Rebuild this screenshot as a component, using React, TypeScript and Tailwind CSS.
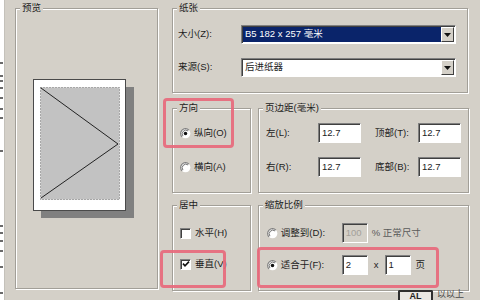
import React from 'react';

const stripMarks = [62, 75, 80, 87, 97, 108, 117, 150, 225, 232, 240, 250, 266, 292];

const Group = ({ label, className, children }: { label: string; className?: string; children?: React.ReactNode }) => (
  <div className={`relative border border-[#a29f98] shadow-[1px_1px_0_#ffffff,inset_1px_1px_0_#ffffff] ${className ?? ''}`}>
    <span className="absolute -top-[7px] left-[4px] bg-[#d4d0c8] px-[2px] leading-[12px]">{label}</span>
    {children}
  </div>
);

const Radio = ({ checked }: { checked?: boolean }) => (
  <svg width="11" height="11" viewBox="0 0 12 12" className="shrink-0">
    <circle cx="6" cy="6" r="5.3" fill="#ffffff" />
    <path d="M2.25 9.75 A5.3 5.3 0 0 1 9.75 2.25" fill="none" stroke="#7d7d7d" strokeWidth="1.2" />
    <path d="M3.2 8.8 A4 4 0 0 1 8.8 3.2" fill="none" stroke="#404040" strokeWidth="0.8" />
    {checked && <circle cx="6" cy="6" r="1.9" fill="#111111" />}
  </svg>
);

const Check = ({ checked }: { checked?: boolean }) => (
  <div className="flex h-[11px] w-[11px] shrink-0 items-center justify-center border border-t-[#808080] border-l-[#808080] border-b-white border-r-white bg-white shadow-[inset_1px_1px_0_#404040]">
    {checked && (
      <svg width="8" height="8" viewBox="0 0 8 8">
        <path d="M1 3.6 L3 5.8 L7 1.6" fill="none" stroke="#111111" strokeWidth="1.6" />
      </svg>
    )}
  </div>
);

const Field = ({ value, className, disabled }: { value: string; className?: string; disabled?: boolean }) => (
  <div
    className={`flex h-[20px] items-center border border-t-[#808080] border-l-[#808080] border-b-white border-r-white pl-[3px] shadow-[inset_1px_1px_0_#404040] ${
      disabled ? 'bg-[#d4d0c8] text-[#a3a09a]' : 'bg-white'
    } ${className ?? ''}`}
  >
    {value}
  </div>
);

const DropButton = () => (
  <div className="flex h-[15px] w-[13px] items-center justify-center border border-t-white border-l-white border-b-[#404040] border-r-[#404040] bg-[#d4d0c8]">
    <svg width="7" height="4" viewBox="0 0 7 4">
      <path d="M0 0 H7 L3.5 4 Z" fill="#111111" />
    </svg>
  </div>
);

const Select = ({ value, selected }: { value: string; selected?: boolean }) => (
  <div className="flex h-[19px] w-[215px] items-center border border-t-[#808080] border-l-[#808080] border-b-white border-r-white bg-white p-[1px] shadow-[inset_1px_1px_0_#404040]">
    <div className={`flex h-full flex-1 items-center pl-[2px] ${selected ? 'bg-[#0a246a] text-white' : ''}`}>{value}</div>
    <DropButton />
  </div>
);

const PagePreview = () => (
  <svg width="101" height="139" viewBox="0 0 101 139">
    <rect x="8" y="8" width="93" height="131" fill="#808080" />
    <rect x="0.5" y="0.5" width="92" height="131" fill="#ffffff" stroke="#4a4a4a" strokeWidth="1" />
    <rect x="7.5" y="8.5" width="79" height="112" fill="#c2c2c2" stroke="#6e6e6e" strokeWidth="1" strokeDasharray="1 2" />
    <polyline points="8,9 85,65 8,119" fill="none" stroke="#222222" strokeWidth="1" />
  </svg>
);

const Highlight = ({ className }: { className: string }) => (
  <div className={`pointer-events-none absolute rounded-[4px] border-[3px] border-[#e8677a]/90 ${className}`} />
);

export default function App() {
  return (
    <div className="relative flex h-[300px] w-[480px] overflow-hidden bg-[#d4d0c8] font-['Liberation_Sans','Noto_Sans_CJK_SC',sans-serif] text-[9.5px] text-[#1c1c1c]">
      <svg width="5" height="300" className="shrink-0">
        <rect width="4" height="300" fill="#ffffff" />
        <rect x="4" width="1" height="300" fill="#c4c1ba" />
        {stripMarks.map((y) => (
          <rect key={y} x="0" y={y} width="3" height="2" fill="#6a6a6a" />
        ))}
      </svg>

      <div className="flex gap-[14px] pl-[10px] pt-[8px]">
        <Group label="预览" className="flex h-[281px] w-[143px] items-center justify-center pr-[6px]">
          <PagePreview />
        </Group>

        <div className="flex w-[297px] flex-col">
          <Group label="纸张" className="flex h-[85px] w-[296px] flex-col gap-[14px] pl-[5px] pt-[16px]">
            <div className="flex items-center">
              <span className="w-[63px]">大小(Z):</span>
              <Select value="B5 182 x 257 毫米" selected />
            </div>
            <div className="flex items-center">
              <span className="w-[63px]">来源(S):</span>
              <Select value="后进纸器" />
            </div>
          </Group>

          <div className="mt-[15px] flex h-[85px] gap-[7px]">
            <Group label="方向" className="flex w-[79px] flex-col gap-[20px] pl-[7px] pt-[17px]">
              <div className="flex h-[14px] items-center gap-[3px]">
                <Radio checked />
                <span>纵向(O)</span>
              </div>
              <div className="flex h-[14px] items-center gap-[3px]">
                <Radio />
                <span>横向(A)</span>
              </div>
            </Group>

            <Group label="页边距(毫米)" className="flex w-[211px] flex-col gap-[14px] pl-[7px] pt-[14px]">
              <div className="flex items-center">
                <span className="w-[52px]">左(L):</span>
                <Field value="12.7" className="w-[43px]" />
                <span className="ml-[14px] w-[43px]">顶部(T):</span>
                <Field value="12.7" className="w-[43px]" />
              </div>
              <div className="flex items-center">
                <span className="w-[52px]">右(R):</span>
                <Field value="12.7" className="w-[43px]" />
                <span className="ml-[14px] w-[43px]">底部(B):</span>
                <Field value="12.7" className="w-[43px]" />
              </div>
            </Group>
          </div>

          <div className="mt-[12px] flex h-[86px] gap-[7px]">
            <Group label="居中" className="flex w-[79px] flex-col gap-[17px] pl-[7px] pt-[20px]">
              <div className="flex h-[14px] items-center gap-[4px]">
                <Check />
                <span>水平(H)</span>
              </div>
              <div className="flex h-[14px] items-center gap-[4px]">
                <Check checked />
                <span>垂直(V)</span>
              </div>
            </Group>

            <Group label="缩放比例" className="flex w-[212px] flex-col gap-[12px] pl-[8px] pt-[17px]">
              <div className="flex h-[20px] items-center">
                <div className="flex w-[75px] items-center gap-[3px]">
                  <Radio />
                  <span>调整到(D):</span>
                </div>
                <Field value="100" disabled className="w-[26px]" />
                <span className="ml-[4px] text-[#5a5a5a]">% 正常尺寸</span>
              </div>
              <div className="flex h-[20px] items-center">
                <div className="flex w-[75px] items-center gap-[3px]">
                  <Radio checked />
                  <span>适合于(F):</span>
                </div>
                <Field value="2" className="w-[26px]" />
                <span className="mx-[6px]">x</span>
                <Field value="1" className="w-[26px]" />
                <span className="ml-[5px]">页</span>
              </div>
            </Group>
          </div>
        </div>
      </div>

      <Highlight className="left-[163px] top-[98px] h-[50px] w-[71px]" />
      <Highlight className="left-[160px] top-[250px] h-[38px] w-[66px]" />
      <Highlight className="left-[257px] top-[247px] h-[41px] w-[182px]" />

      <div className="absolute left-[398px] top-[290px] flex h-[12px] w-[35px] items-start justify-center rounded-t-[2px] border-2 border-b-0 border-[#2e2e2e] bg-[#e9e7e3] text-[9px] font-bold leading-[9px] text-[#222222]">
        AL
      </div>
      <span className="absolute left-[437px] top-[290px] text-[9px] leading-[9px] text-[#4a4a4a]">以以上</span>
    </div>
  );
}
